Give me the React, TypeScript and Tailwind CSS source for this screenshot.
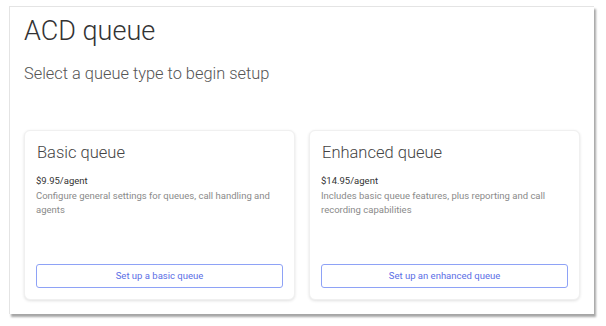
import React from 'react';

const queues = [
  {
    name: 'Basic queue',
    price: '$9.95/agent',
    desc: 'Configure general settings for queues, call handling and agents',
    action: 'Set up a basic queue',
  },
  {
    name: 'Enhanced queue',
    price: '$14.95/agent',
    desc: 'Includes basic queue features, plus reporting and call recording capabilities',
    action: 'Set up an enhanced queue',
  },
];

const QueueCard = ({ q }: { q: (typeof queues)[number] }) => (
  <div className="flex h-[170px] w-[271px] flex-col rounded-[6px] border border-[#f0f0f0] bg-white px-[11px] pb-[11px] pt-[11px] shadow-[0_1px_3px_rgba(0,0,0,0.12)]">
    <h2 className="pl-[1px] text-[16.5px] leading-[22px] font-light text-[#444]">{q.name}</h2>
    <p className="mt-[10px] text-[9.5px] leading-[13px] text-[#333]">{q.price}</p>
    <p className="mt-[2px] text-[9.5px] leading-[14px] text-[#8a8a8a]">{q.desc}</p>
    <button className="mt-auto h-[24px] w-full rounded-[3px] border border-[#8ea2f6] text-[9.5px] text-[#5b6ee6]">
      {q.action}
    </button>
  </div>
);

export default function App() {
  return (
    <div className="h-[326px] w-[606px] bg-white pl-[9px] pt-[6px] font-['Roboto',sans-serif]">
      {/* panel */}
      <div className="h-[308px] w-[585px] border-t border-l border-[#e4e4e4] bg-white px-[14px] shadow-[2px_3px_2px_rgba(0,0,0,0.35)]">
        <h1 className="pt-[7px] text-[27px] leading-[34px] font-light text-[#333]">ACD queue</h1>
        <p className="mt-[15px] text-[16.4px] leading-[22px] font-light text-[#555]">
          Select a queue type to begin setup
        </p>
        <div className="mt-[45px] flex gap-[14px]">
          {queues.map((q) => (
            <QueueCard key={q.name} q={q} />
          ))}
        </div>
      </div>
    </div>
  );
}
